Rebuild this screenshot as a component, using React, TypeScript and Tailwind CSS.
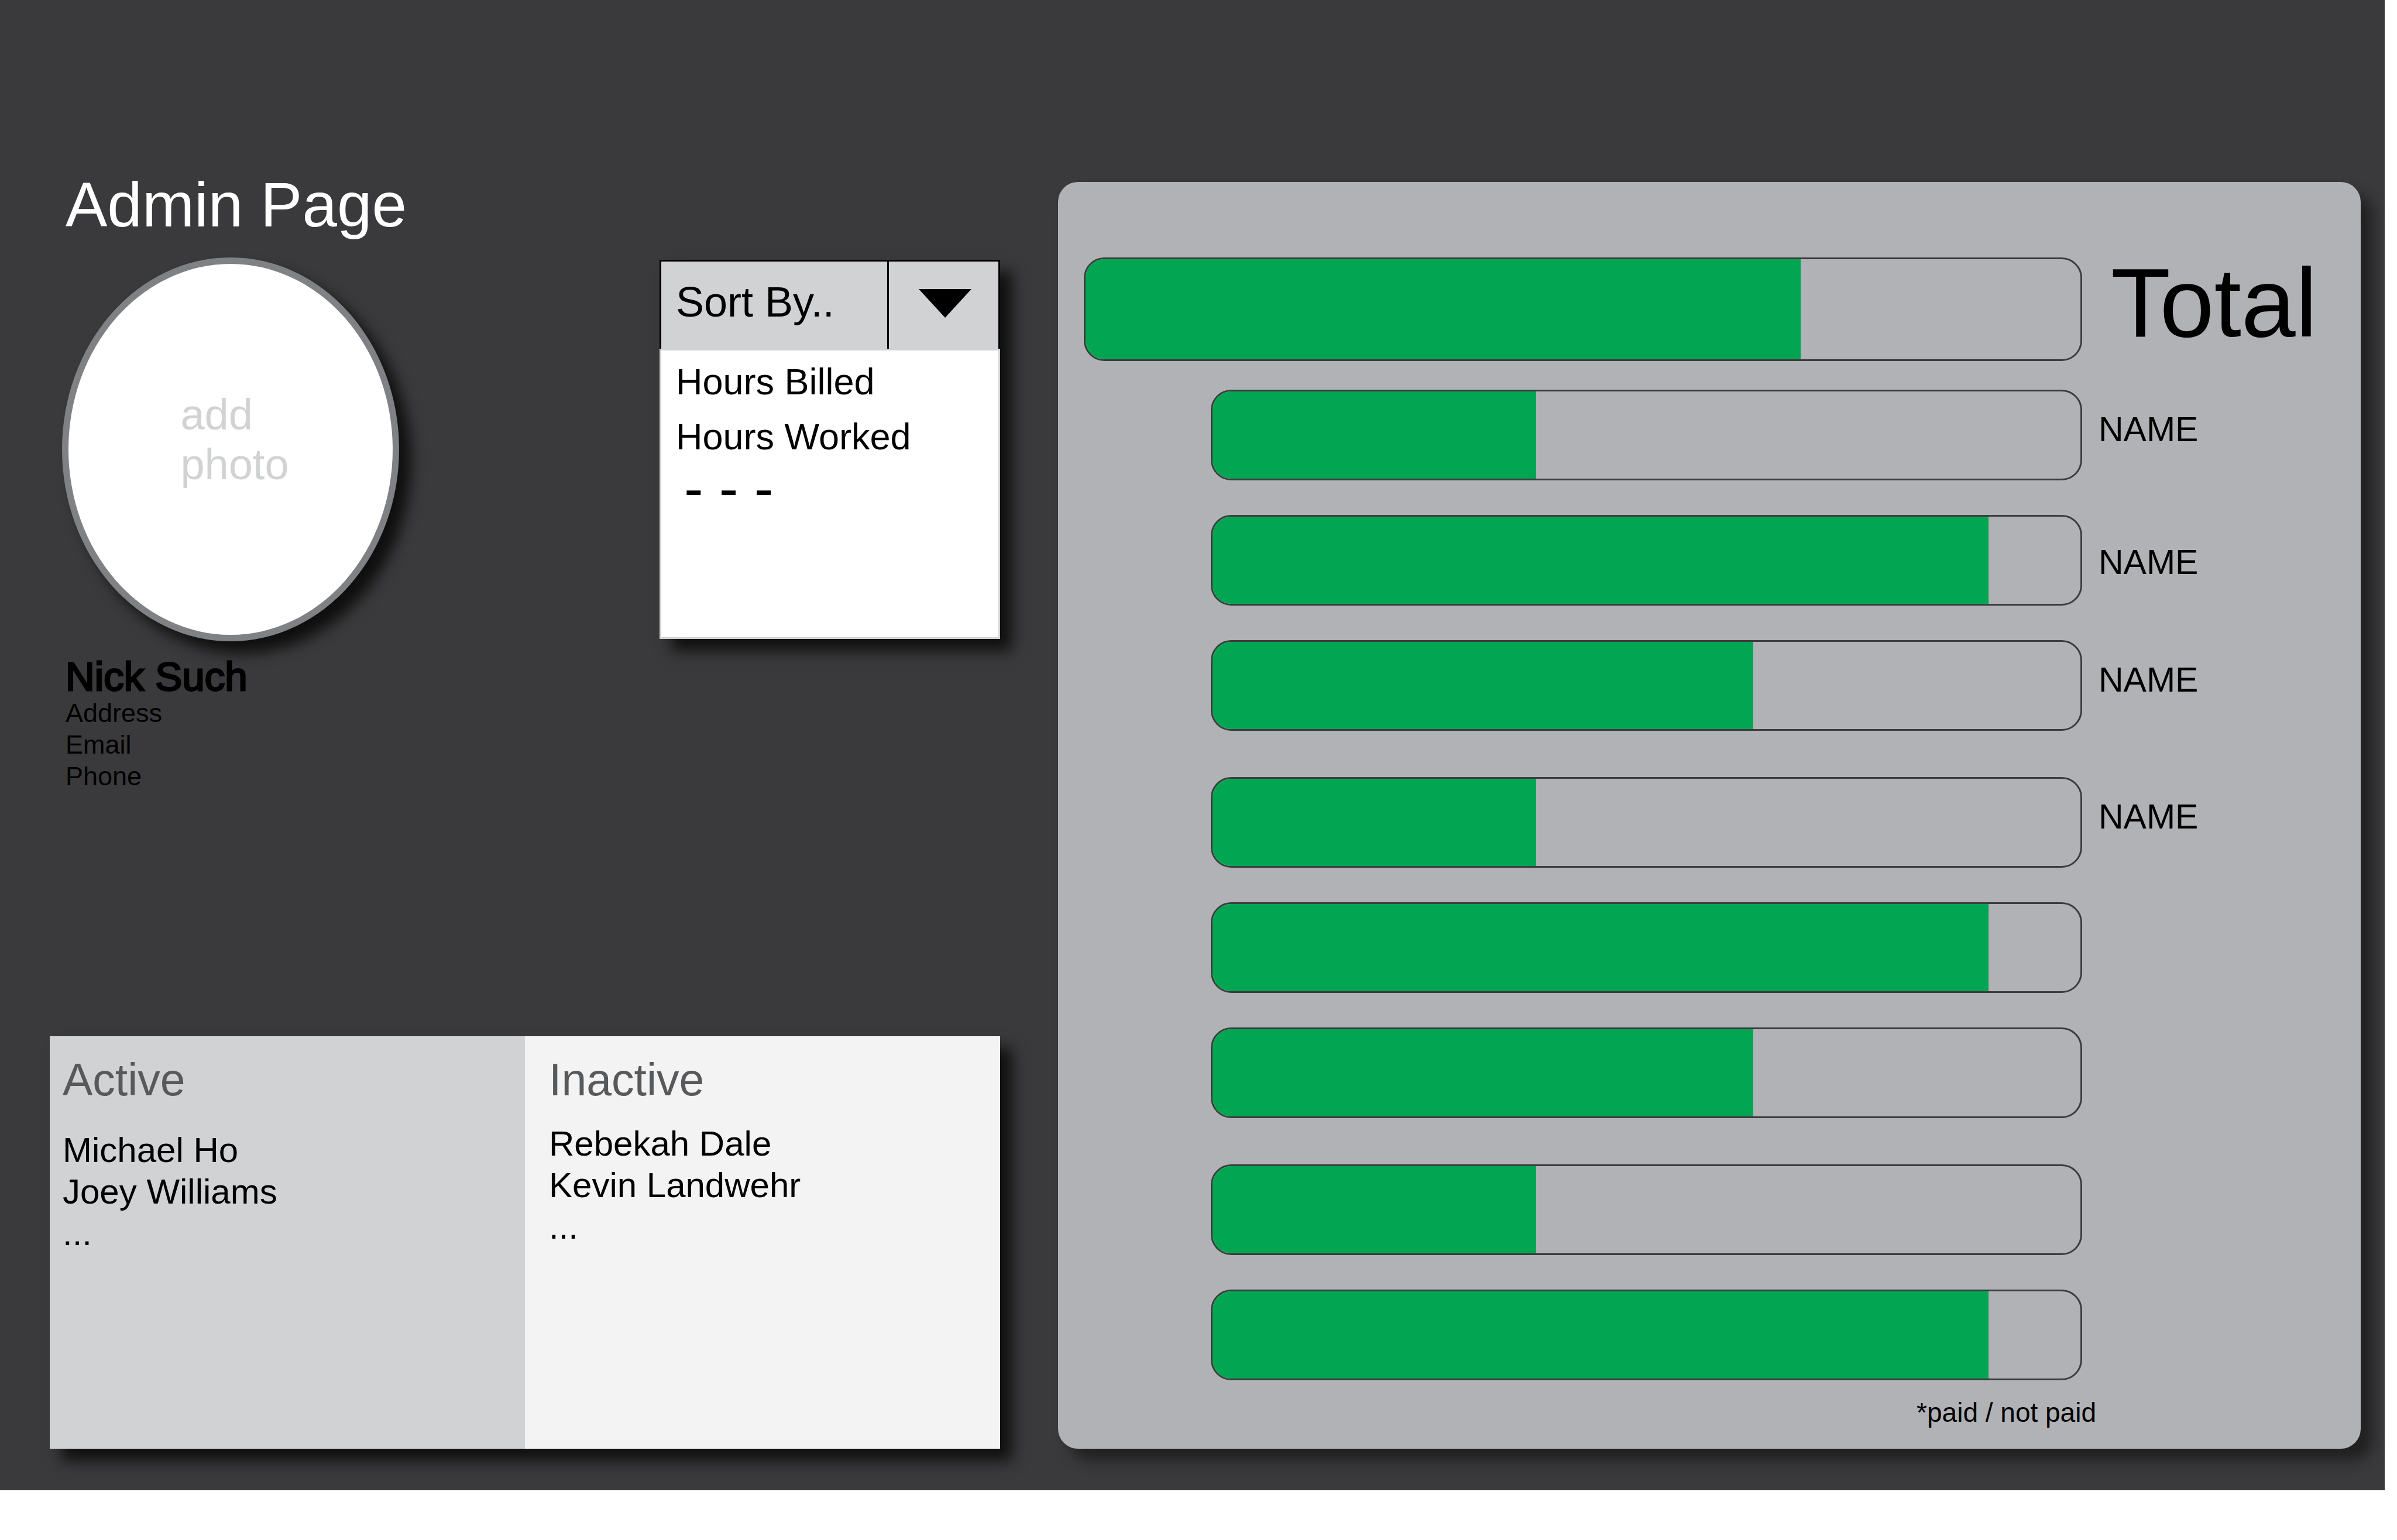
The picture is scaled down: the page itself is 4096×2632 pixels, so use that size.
import { useState } from "react";

type Bar = { label: string; percent: number; low?: boolean };

const groups: Bar[][] = [
  [
    { label: "NAME", percent: 37.3 },
    { label: "NAME", percent: 89.4, low: true },
    { label: "NAME", percent: 62.3 },
  ],
  [
    { label: "NAME", percent: 37.3 },
    { label: "", percent: 89.4 },
    { label: "", percent: 62.3 },
  ],
  [
    { label: "", percent: 37.3 },
    { label: "", percent: 89.4 },
  ],
];

const sortOptions = ["Hours Billed", "Hours Worked"];

function Meter({ percent, label, className }: { percent: number; label: string; className: string }) {
  return (
    <div
      role="progressbar"
      aria-label={label || "Unnamed"}
      aria-valuenow={percent}
      aria-valuemin={0}
      aria-valuemax={100}
      className={`overflow-hidden rounded-[35px] border-[3px] border-[#3c3c3e] ${className}`}
    >
      <div className="h-full bg-[#02a652]" style={{ width: `${percent}%` }} />
    </div>
  );
}

function Profile() {
  return (
    <section className="ml-[21px] flex flex-col">
      <h1 className="mb-[50px] pl-[6px] text-[107px] leading-[79px] text-white">Admin Page</h1>
      <button
        type="button"
        className="flex h-[656px] w-[576px] items-center justify-center rounded-[50%] border-[11px] border-[#808184] bg-white pb-[34px] pl-[14px] text-left text-[74px] leading-[85px] text-[#d1d2d4] shadow-[20px_20px_24px_rgba(0,0,0,0.75)]"
      >
        <span>
          add
          <br />
          photo
        </span>
      </button>
      <div className="mt-[26px] pl-[6px] text-black">
        <h2 className="text-[69px] leading-[70px] [-webkit-text-stroke:3px_black]">Nick Such</h2>
        <address className="text-[45px] leading-[54px] not-italic">
          Address
          <br />
          Email
          <br />
          Phone
        </address>
      </div>
    </section>
  );
}

function SortMenu() {
  const [sort, setSort] = useState("");
  return (
    <section className="mt-[133px] flex w-[582px] flex-col self-start shadow-[20px_20px_24px_rgba(0,0,0,0.75)]">
      <button
        type="button"
        aria-haspopup="listbox"
        aria-expanded="true"
        className="flex h-[152px] items-stretch border-[3px] border-b-0 border-black bg-[#d1d2d4] text-left text-[72px] leading-[84px] text-black"
      >
        <span className="flex flex-1 items-center pb-[12px] pl-[25px]">Sort By..</span>
        <span className="flex w-[190px] items-center justify-center border-l-[3px] border-black pb-[6px] pl-[5px]">
          <svg viewBox="0 0 90 49" className="h-[49px] w-[90px]" aria-hidden="true">
            <path d="M0 0H90L45 49Z" fill="#000" />
          </svg>
        </span>
      </button>
      <ul
        role="listbox"
        aria-label="Sort by"
        className="h-[496px] border-[3px] border-[#d1d2d4] bg-white px-[25px] pt-[6px] text-[63px] leading-[94px] text-black"
      >
        {sortOptions.map((option) => (
          <li key={option} role="option" aria-selected={sort === option}>
            <button type="button" className="block w-full text-left" onClick={() => setSort(option)}>
              {option}
            </button>
          </li>
        ))}
        <li role="option" aria-selected="false" className="pl-[14px] text-[98px] leading-[82px]">
          - - -
        </li>
      </ul>
    </section>
  );
}

function People({
  title,
  names,
  className,
  listClassName,
}: {
  title: string;
  names: string[];
  className: string;
  listClassName: string;
}) {
  return (
    <div className={`pt-[28px] ${className}`}>
      <h2 className="text-[77px] leading-[92px] text-[#58595b]">{title}</h2>
      <ul className={`text-[60px] leading-[71px] text-black ${listClassName}`}>
        {names.map((name) => (
          <li key={name}>{name}</li>
        ))}
        <li>...</li>
      </ul>
    </div>
  );
}

export default function App() {
  return (
    <div className="min-h-screen bg-white pr-[21px] pb-[85px] font-['Liberation_Sans',Arial,sans-serif]">
      <main className="grid grid-cols-[1624fr_2226fr] gap-x-[99px] bg-[#3a3a3c] pt-[311px] pr-[41px] pb-[71px] pl-[85px]">
        <div className="flex flex-col justify-between">
          <div className="flex justify-between">
            <Profile />
            <SortMenu />
          </div>
          <section className="grid h-[705px] grid-cols-2 shadow-[20px_20px_24px_rgba(0,0,0,0.75)]">
            <People
              title="Active"
              names={["Michael Ho", "Joey Williams"]}
              className="bg-[#d1d2d4] pl-[22px]"
              listClassName="mt-[39px]"
            />
            <People
              title="Inactive"
              names={["Rebekah Dale", "Kevin Landwehr"]}
              className="bg-[#f3f3f3] pl-[41px]"
              listClassName="mt-[28px]"
            />
          </section>
        </div>

        <section className="rounded-[34px] bg-[#b1b2b5] pt-[129px] pl-[44px] text-black shadow-[20px_20px_24px_rgba(0,0,0,0.45)]">
          <div className="flex items-start">
            <Meter percent={71.9} label="Total" className="h-[177px] flex-1" />
            <span className="w-[476px] pl-[49px] text-[167px] leading-[155px]">Total</span>
          </div>
          <div className="mt-[49px] flex flex-col gap-[79px] pl-[217px]">
            {groups.map((group, g) => (
              <div key={g} className="flex flex-col gap-[59px]">
                {group.map((bar, i) => (
                  <div key={i} className="flex">
                    <Meter percent={bar.percent} label={bar.label} className="h-[155px] flex-1" />
                    <span
                      className={`w-[476px] pl-[28px] text-[59px] leading-[68px] ${bar.low ? "pt-[47px]" : "pt-[34px]"}`}
                    >
                      {bar.label}
                    </span>
                  </div>
                ))}
              </div>
            ))}
          </div>
          <p className="mt-[27px] mb-[34px] pr-[452px] text-right text-[46px] leading-[56px]">*paid / not paid</p>
        </section>
      </main>
    </div>
  );
}
